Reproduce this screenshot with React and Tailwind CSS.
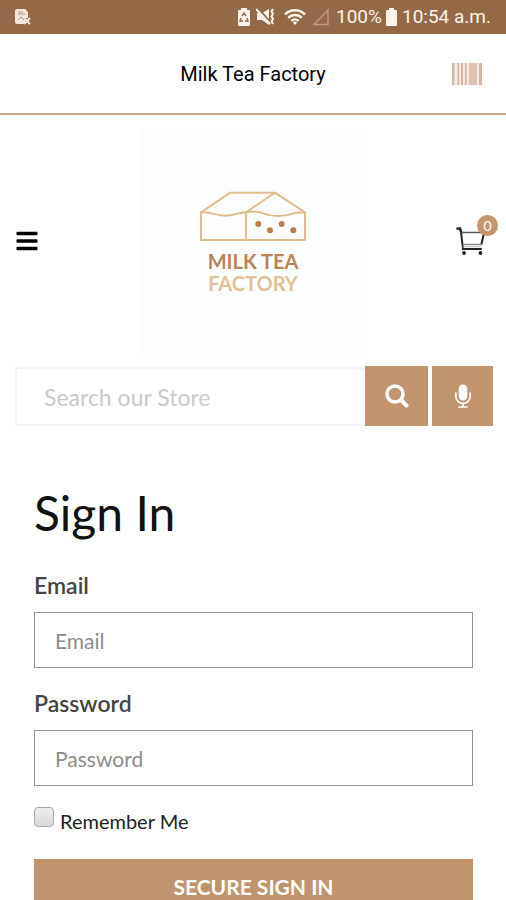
import { FaBars } from "react-icons/fa";

function StatusBar() {
  return (
    <div className="flex h-[34px] items-center justify-between border-b border-[#9a6230] bg-[#946948] pl-[14px] pr-[15px] text-[#fdf3ea]">
      <svg className="h-5 w-[18px]" viewBox="0 0 18 20" aria-hidden="true">
        <path d="M3 2h8l3 3v6h-3v6H3a2 2 0 0 1-2-2V4a2 2 0 0 1 2-2z" fill="#f3e6db" />
        <path d="M4 5h5M4 7h7" stroke="#b89579" strokeWidth="1" />
        <path d="M4 13l3-3 3 3" stroke="#b89579" strokeWidth="1" fill="none" />
        <path d="M10 11l6 6M16 11l-6 6" stroke="#f3e6db" strokeWidth="2" />
      </svg>

      <div className="flex items-center font-[Roboto,sans-serif] text-[19px] leading-6">
        <svg className="h-[18px] w-[14px]" viewBox="0 0 14 18" aria-hidden="true">
          <path d="M4 0h6v2h2a1 1 0 0 1 1 1v14a1 1 0 0 1-1 1H2a1 1 0 0 1-1-1V3a1 1 0 0 1 1-1h2z" fill="currentColor" />
          <path d="M5 8l2-3 2 3M10 10l1 3H8M6 13H3l1-3" stroke="#946948" strokeWidth="1.4" fill="none" />
        </svg>
        <svg className="ml-[5px] h-[18px] w-5" viewBox="0 0 20 18" aria-hidden="true">
          <path d="M1 5h5l7-4v16l-7-5H1z" fill="currentColor" />
          <path d="M2 0l13 15" stroke="#946948" strokeWidth="2" />
          <path d="M0 1l14 15" stroke="currentColor" strokeWidth="2" />
          <path d="M17 1l-1.5 2.5L17 6l-1.5 2.5L17 11l-1.5 2.5L17 16" stroke="currentColor" strokeWidth="2" fill="none" />
        </svg>
        <svg className="ml-[8px] h-[18px] w-[22px]" viewBox="0 0 22 18" aria-hidden="true">
          <g fill="none" stroke="currentColor" strokeWidth="2.4">
            <path d="M1 6.5a14 14 0 0 1 20 0" />
            <path d="M4.3 9.8a9.5 9.5 0 0 1 13.4 0" />
            <path d="M7.3 13a5.3 5.3 0 0 1 7.4 0" />
          </g>
          <path d="M8.8 14.6a3.1 3.1 0 0 1 4.4 0L11 17z" fill="currentColor" />
        </svg>
        <svg className="ml-[6px] h-[18px] w-[17px]" viewBox="0 0 17 18" aria-hidden="true">
          <path d="M16 2v14.5H2z" fill="none" stroke="#c09c7f" strokeWidth="1.4" />
        </svg>
        <span className="ml-[7px]">100%</span>
        <svg className="ml-[3px] h-[18px] w-[13px]" viewBox="0 0 13 18" aria-hidden="true">
          <path d="M4 0h5v2h2a1 1 0 0 1 1 1v14a1 1 0 0 1-1 1H2a1 1 0 0 1-1-1V3a1 1 0 0 1 1-1h2z" fill="currentColor" />
        </svg>
        <span className="ml-1">10:54 a.m.</span>
      </div>
    </div>
  );
}

function AppHeader() {
  return (
    <header className="grid h-[81px] grid-cols-[1fr_auto_1fr] items-center border-b-2 border-[#cfa693]">
      <h1 className="col-start-2 font-[Roboto,sans-serif] text-[20px] leading-6 text-black">
        Milk Tea Factory
      </h1>
      <button type="button" aria-label="Scan barcode" className="mr-[23px] justify-self-end">
        <svg className="h-6 w-8" viewBox="0 0 32 24">
          <rect x="1" y="1" width="30" height="22" fill="#f6ebe4" />
          <g fill="#d3b5a2">
            <rect x="1" y="1" width="2.4" height="22" />
            <rect x="6.5" y="1" width="1.6" height="22" />
            <rect x="10" y="1" width="2" height="22" />
            <rect x="14" y="1" width="1.6" height="22" />
            <rect x="28" y="1" width="3" height="22" />
          </g>
          <rect x="18" y="1" width="8" height="22" fill="#dcc4b4" />
        </svg>
      </button>
    </header>
  );
}

function Logo() {
  return (
    <a
      href="#"
      className="flex h-[226px] flex-col items-center bg-[#fcfefe] pt-[63px] font-[Lato,sans-serif] text-[20px] font-bold leading-[22px]"
    >
      <svg className="mb-2 h-[51px] w-[108px]" viewBox="29 34 324 153" aria-hidden="true">
        <g fill="none" stroke="#dfbd8d" strokeWidth="6" strokeLinejoin="round">
          <path d="M35 98L123 39H257L347 98V181H35z" />
          <path d="M170 181V98L257 39" />
          <path d="M35 98C65 95 78 108 107 108C135 108 145 98 170 98C190 94 207 96 220 101C250 111 285 111 310 102C325 97 335 99 347 98" />
        </g>
        <g fill="#b97f54">
          <circle cx="207" cy="133" r="9" />
          <circle cx="242" cy="152" r="9" />
          <circle cx="277" cy="133" r="9" />
          <circle cx="312" cy="152" r="9" />
        </g>
      </svg>
      <span className="text-[#bb8359]">MILK TEA</span>
      <span className="text-[#dfc297]">FACTORY</span>
    </a>
  );
}

function StoreBar() {
  return (
    <div className="grid grid-cols-[1fr_226px_1fr] items-center pt-[13px]">
      <button type="button" aria-label="Menu" className="justify-self-start pl-[15px]">
        <FaBars className="size-6 text-black" />
      </button>
      <Logo />
      <button type="button" aria-label="Cart" className="relative mr-5 justify-self-end">
        <svg className="h-7 w-[30px]" viewBox="0 0 30 28">
          <g fill="none" stroke="#222" strokeLinecap="round">
            <path d="M1.5 1.5H4l1.2 4" strokeWidth="2.6" />
            <path d="M5 5l2 17h18" strokeWidth="2" />
            <path d="M5.5 5.5H28" strokeWidth="1.6" stroke="#555" />
            <path d="M28 6L25.5 17" strokeWidth="2" />
            <path d="M7 17.5h19" strokeWidth="1.4" stroke="#888" />
            <path d="M7 19.8h18" strokeWidth="1" stroke="#bbb" />
          </g>
          <circle cx="8" cy="26" r="1.9" fill="#222" />
          <circle cx="24.5" cy="26" r="1.9" fill="#222" />
        </svg>
        <span className="absolute -right-3 -top-3 flex size-[21px] items-center justify-center rounded-full bg-[#c6956d] font-[Lato,sans-serif] text-[14px] leading-none text-white">
          0
        </span>
      </button>
    </div>
  );
}

function SearchBar() {
  return (
    <form role="search" className="flex items-end pl-[15px] pr-[13px] pt-3">
      <input
        type="search"
        aria-label="Search our Store"
        placeholder="Search our Store"
        className="h-[59px] min-w-0 flex-1 border-2 border-r-0 border-[#f3f3f3] pl-[27px] text-[23px] outline-none placeholder:text-[#c9c9c9]"
      />
      <button
        type="submit"
        aria-label="Search"
        className="flex h-[60px] w-[63px] items-center justify-center bg-[#c1946e] text-white"
      >
        <svg className="size-6" viewBox="0 0 24 24">
          <g fill="none" stroke="currentColor" strokeLinecap="round">
            <circle cx="10" cy="10" r="8" strokeWidth="3.6" />
            <path d="M16.5 16.5l5 5" strokeWidth="4" />
          </g>
        </svg>
      </button>
      <button
        type="button"
        aria-label="Voice search"
        className="ml-1 flex h-[60px] w-[61px] items-center justify-center bg-[#c1946e] text-white"
      >
        <svg className="h-6 w-[18px]" viewBox="0 0 18 24">
          <rect x="4.7" y="0.5" width="8.6" height="16" rx="4.3" fill="currentColor" />
          <path
            d="M1.8 9v3.2a7.2 7.2 0 0 0 14.4 0V9M9 19.5v3M5 23h8"
            fill="none"
            stroke="currentColor"
            strokeWidth="1.7"
            strokeLinecap="round"
          />
        </svg>
      </button>
    </form>
  );
}

function Field({ id, type, label }) {
  return (
    <div className="mb-[21px]">
      <label htmlFor={id} className="mb-[13px] block text-[23px] font-semibold leading-7 text-[#444]">
        {label}
      </label>
      <input
        id={id}
        type={type}
        placeholder={label}
        className="block h-14 w-full border border-[#8f9393] pl-5 text-[21px] outline-none placeholder:text-[#8d8d8d]"
      />
    </div>
  );
}

function SignInForm() {
  return (
    <form className="pl-[34px] pr-[33px] pt-[63px]">
      <h2 className="mb-[34px] text-[48px] leading-[48px] text-[#111]">Sign In</h2>
      <Field id="email" type="email" label="Email" />
      <Field id="password" type="password" label="Password" />
      <div className="mb-6 flex h-7 items-center">
        <input
          id="remember"
          type="checkbox"
          className="mb-2 size-5 appearance-none rounded-sm border border-[#a8a8a8] bg-linear-to-b from-[#ececec] to-[#d9d9d9] checked:from-[#c1946e] checked:to-[#c1946e]"
        />
        <label htmlFor="remember" className="pl-[6px] text-[20px] leading-7 text-[#222]">
          Remember Me
        </label>
      </div>
      <button type="submit" className="h-14 w-full bg-[#c1946e] text-[21px] font-bold text-white">
        SECURE SIGN IN
      </button>
    </form>
  );
}

export default function App() {
  return (
    <div className="h-screen overflow-y-auto bg-white font-[Lato,sans-serif] [scrollbar-width:none]">
      <StatusBar />
      <AppHeader />
      <main>
        <StoreBar />
        <SearchBar />
        <SignInForm />
      </main>
    </div>
  );
}
